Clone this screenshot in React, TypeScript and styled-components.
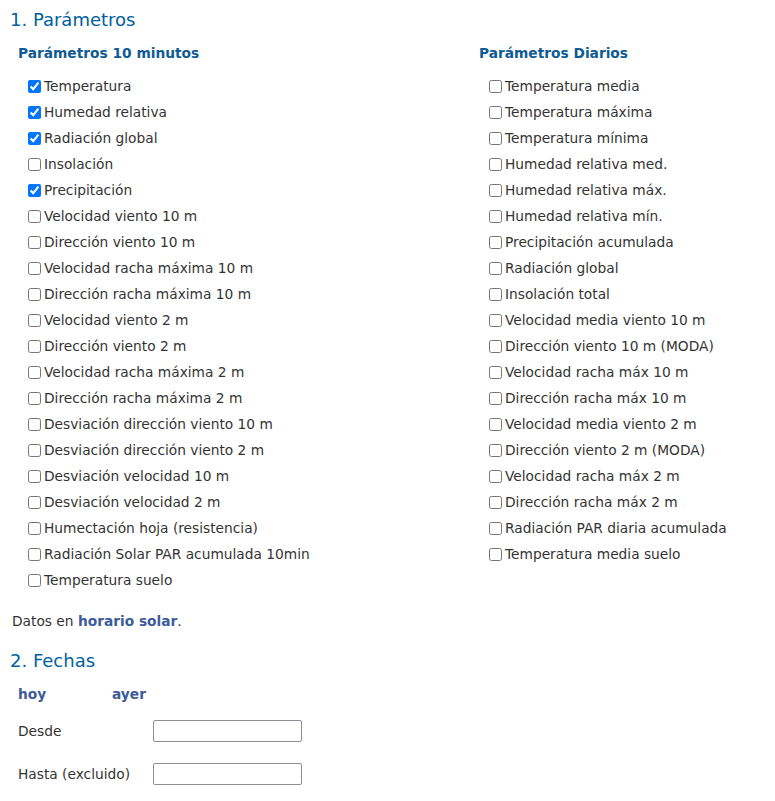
import React from "react";
import styled, { createGlobalStyle } from "styled-components";

const GlobalStyle = createGlobalStyle`
  body {
    margin: 0;
    background: #fff;
    font-family: "DejaVu Sans", Verdana, sans-serif;
    font-size: 13.75px;
    color: #333;
  }
`;

const Page = styled.div`
  padding: 8px 10px 0 10px;
`;

const SectionTitle = styled.h2<{ $top?: number }>`
  margin: ${(p) => p.$top ?? 0}px 0 0 0;
  font-size: 18px;
  line-height: 24px;
  font-weight: normal;
  color: #005f9e;
`;

const Columns = styled.div`
  display: grid;
  grid-template-columns: 461px 1fr;
  padding-left: 8px;
  margin-top: 10px;
`;

const Column = styled.div`
  display: flex;
  flex-direction: column;
`;

const GroupTitle = styled.h3`
  margin: 0;
  font-size: 13.75px;
  line-height: 22px;
  font-weight: bold;
  color: #0e5a94;
`;

const List = styled.ul`
  list-style: none;
  margin: 9px 0 0 0;
  padding: 0 0 0 6px;
`;

const Item = styled.li`
  height: 26px;
  display: flex;
  align-items: center;
`;

const Check = styled.input`
  margin: 0 3px 0 4px;
  width: 13px;
  height: 13px;
`;

const Note = styled.p`
  margin: 18px 0 0 2px;
  line-height: 20px;
`;

const Link = styled.a`
  font-weight: bold;
  color: #3d5a9a;
  text-decoration: none;
`;

const QuickLinks = styled.div`
  display: flex;
  margin-top: 11px;
  padding-left: 8px;
  line-height: 20px;
`;

const Quick = styled(Link)<{ $w: number }>`
  width: ${(p) => p.$w}px;
`;

const DateGrid = styled.div`
  display: grid;
  grid-template-columns: 135px 149px;
  grid-auto-rows: 22px;
  row-gap: 21px;
  align-items: center;
  margin-top: 16px;
  padding-left: 8px;
`;

const DateInput = styled.input`
  box-sizing: border-box;
  width: 149px;
  height: 22px;
  border: 1px solid #8f8c9c;
  border-radius: 2px;
  padding: 1px 2px;
  font: inherit;
`;

const tenMin: [string, boolean][] = [
  ["Temperatura", true],
  ["Humedad relativa", true],
  ["Radiación global", true],
  ["Insolación", false],
  ["Precipitación", true],
  ["Velocidad viento 10 m", false],
  ["Dirección viento 10 m", false],
  ["Velocidad racha máxima 10 m", false],
  ["Dirección racha máxima 10 m", false],
  ["Velocidad viento 2 m", false],
  ["Dirección viento 2 m", false],
  ["Velocidad racha máxima 2 m", false],
  ["Dirección racha máxima 2 m", false],
  ["Desviación dirección viento 10 m", false],
  ["Desviación dirección viento 2 m", false],
  ["Desviación velocidad 10 m", false],
  ["Desviación velocidad 2 m", false],
  ["Humectación hoja (resistencia)", false],
  ["Radiación Solar PAR acumulada 10min", false],
  ["Temperatura suelo", false],
];

const daily: string[] = [
  "Temperatura media",
  "Temperatura máxima",
  "Temperatura mínima",
  "Humedad relativa med.",
  "Humedad relativa máx.",
  "Humedad relativa mín.",
  "Precipitación acumulada",
  "Radiación global",
  "Insolación total",
  "Velocidad media viento 10 m",
  "Dirección viento 10 m (MODA)",
  "Velocidad racha máx 10 m",
  "Dirección racha máx 10 m",
  "Velocidad media viento 2 m",
  "Dirección viento 2 m (MODA)",
  "Velocidad racha máx 2 m",
  "Dirección racha máx 2 m",
  "Radiación PAR diaria acumulada",
  "Temperatura media suelo",
];

function ParamList({ items }: { items: [string, boolean][] }) {
  return (
    <List>
      {items.map(([label, on]) => (
        <Item key={label}>
          <Check type="checkbox" defaultChecked={on} />
          <span>{label}</span>
        </Item>
      ))}
    </List>
  );
}

export default function App() {
  return (
    <Page>
      <GlobalStyle />
      <SectionTitle>1. Parámetros</SectionTitle>
      <Columns>
        <Column>
          <GroupTitle>Parámetros 10 minutos</GroupTitle>
          <ParamList items={tenMin} />
        </Column>
        <Column>
          <GroupTitle>Parámetros Diarios</GroupTitle>
          <ParamList items={daily.map((d) => [d, false] as [string, boolean])} />
        </Column>
      </Columns>
      <Note>
        Datos en <Link href="#">horario solar</Link>.
      </Note>
      <SectionTitle $top={18}>2. Fechas</SectionTitle>
      <QuickLinks>
        <Quick href="#" $w={94}>hoy</Quick>
        <Quick href="#" $w={60}>ayer</Quick>
      </QuickLinks>
      <DateGrid>
        <span>Desde</span>
        <DateInput type="text" />
        <span>Hasta (excluido)</span>
        <DateInput type="text" />
      </DateGrid>
    </Page>
  );
}
